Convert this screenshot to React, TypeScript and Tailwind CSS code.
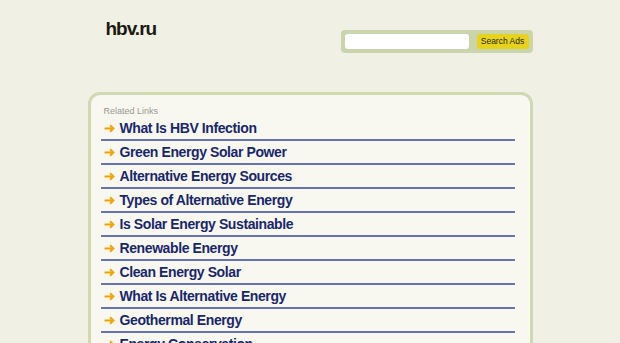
import React from "react";

const links = [
  "What Is HBV Infection",
  "Green Energy Solar Power",
  "Alternative Energy Sources",
  "Types of Alternative Energy",
  "Is Solar Energy Sustainable",
  "Renewable Energy",
  "Clean Energy Solar",
  "What Is Alternative Energy",
  "Geothermal Energy",
  "Energy Conservation",
];

function Arrow() {
  return (
    <svg width="11" height="9" viewBox="0 0 11 9" className="shrink-0">
      <path d="M0.5 4.5H9M6 1.2L9.5 4.5L6 7.8" fill="none" stroke="#f2a400" strokeWidth="1.9" />
    </svg>
  );
}

export default function App() {
  return (
    <div className="min-h-screen bg-[#f0f0e5] font-['Liberation_Sans',Arial,sans-serif]">
      <div className="w-[445px] mx-auto">
        {/* header */}
        <div className="h-[92px] flex items-start justify-between">
          <div className="ml-[18px] mt-[18px] text-[19px] leading-[22px] font-bold tracking-[-1px] text-[#1c1a10]">
            hbv.ru
          </div>
          <div className="mt-[30px] h-[23px] w-[192px] rounded-[4px] bg-[#cbd5ad] p-[4px] flex items-center gap-[8px]">
            <div className="w-[124px] h-[15px] rounded-[3px] bg-white" />
            <div className="w-[52px] h-[15px] rounded-[3px] bg-[#e7d31b] text-[8.5px] leading-[15px] text-center text-[#2a2a10]">
              Search Ads
            </div>
          </div>
        </div>

        {/* panel */}
        <div className="border-[3px] border-[#cfd9b2] rounded-[12px] bg-[#f8f7f0] pl-[10px] pr-[15px] pt-[10px] pb-4">
          <div className="pl-[3px] text-[9px] leading-[12px] text-[#9a9a92]">Related Links</div>
          {links.map((l) => (
            <div key={l} className="h-[24px] flex items-center gap-[5px] pl-[3px] pt-[1px] border-b-2 border-[#6475b2]">
              <Arrow />
              <span className="text-[14px] font-bold tracking-[-0.4px] text-[#18276a]">{l}</span>
            </div>
          ))}
        </div>
      </div>
    </div>
  );
}
